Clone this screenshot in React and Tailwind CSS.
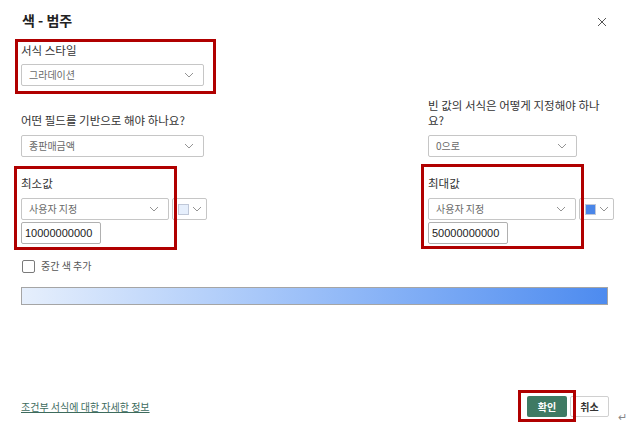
import React from "react";

const font = "font-['Noto_Sans_CJK_KR','Noto_Sans',sans-serif]";
const redBox = "absolute border-[3px] border-[#b00000] pointer-events-none";
const labelClass = "text-[11.5px] text-[#333]";

function Chevron() {
  return (
    <svg width="10" height="6" viewBox="0 0 10 6" className="shrink-0">
      <polyline points="1,1 5,5 9,1" fill="none" stroke="#888" strokeWidth="0.9" />
    </svg>
  );
}

function Dropdown({ value, width }) {
  return (
    <div className={`${width} h-[22px] border border-[#c6c6c6] rounded-[2px] flex items-center justify-between pl-[7px] pr-[9px] bg-white`}>
      <span className="text-[10px] text-[#6a6a6a] leading-none">{value}</span>
      <Chevron />
    </div>
  );
}

function ColorPicker({ color }) {
  return (
    <div className="w-[35px] h-[22px] border border-[#c6c6c6] rounded-[2px] flex items-center justify-between pl-[5px] pr-[4px] bg-white">
      <div className="w-[11px] h-[11px] border border-[#c0c8d8]" style={{ backgroundColor: color }} />
      <Chevron />
    </div>
  );
}

function ValueInput({ value }) {
  return (
    <div className="w-[80px] h-[22px] border border-[#b0b0b0] rounded-[2px] flex items-center pl-[3px] bg-white">
      <span className="text-[11px] text-[#222] leading-none font-['Liberation_Sans',sans-serif]">{value}</span>
    </div>
  );
}

function MinMaxSection({ label, value, color, boxClass }) {
  return (
    <div className="relative flex flex-col">
      <div className={`${labelClass} leading-[16px]`}>{label}</div>
      <div className="flex items-center gap-[3px] mt-[7px]">
        <Dropdown value="사용자 지정" width="w-[148px]" />
        <ColorPicker color={color} />
      </div>
      <div className="mt-[2px]">
        <ValueInput value={value} />
      </div>
      <div className={`${redBox} ${boxClass}`} />
    </div>
  );
}

export default function App() {
  return (
    <div className={`${font} relative w-[632px] h-[435px] bg-white flex flex-col pl-[21px] pr-[18px] pt-[10px] pb-[13px] overflow-hidden`}>
      <div className="flex items-center justify-between h-[20px]">
        <div className="text-[14px] font-bold text-[#222] leading-[20px] pl-[1px]">색 - 범주</div>
        <svg width="10" height="10" viewBox="0 0 10 10" className="mr-[7px] mt-[3px]">
          <path d="M1 1 L9 9 M9 1 L1 9" stroke="#555" strokeWidth="1" />
        </svg>
      </div>

      <div className="relative mt-[12px] w-[183px]">
        <div className={`${labelClass} leading-[16px]`}>서식 스타일</div>
        <div className="mt-[6px]">
          <Dropdown value="그라데이션" width="w-[183px]" />
        </div>
        <div className={`${redBox} -left-[6px] -top-[3px] w-[201px] h-[55px]`} />
      </div>

      <div className="flex items-end justify-between mt-[12px]">
        <div className="flex flex-col w-[186px]">
          <div className={`${labelClass} leading-[15px]`}>어떤 필드를 기반으로 해야 하나요?</div>
          <div className="mt-[7px]">
            <Dropdown value="종판매금액" width="w-[183px]" />
          </div>
        </div>
        <div className="flex flex-col w-[186px]">
          <div className={`${labelClass} leading-[15px]`}>빈 값의 서식은 어떻게 지정해야 하나요?</div>
          <div className="mt-[7px]">
            <Dropdown value="0으로" width="w-[149px]" />
          </div>
        </div>
      </div>

      <div className="flex items-start justify-between mt-[18px]">
        <MinMaxSection label="최소값" value="10000000000" color="#e6effc" boxClass="-left-[7px] -top-[9px] w-[163px] h-[84px]" />
        <div className="w-[186px]">
          <MinMaxSection label="최대값" value="50000000000" color="#4a86e8" boxClass="-left-[7px] -top-[11px] w-[163px] h-[85px]" />
        </div>
      </div>

      <div className="flex items-center mt-[15px] h-[14px]">
        <div className="w-[13px] h-[13px] border border-[#7a7a7a] rounded-[2px] ml-[1px]" />
        <span className="ml-[6px] text-[10px] text-[#555] leading-none">중간 색 추가</span>
      </div>

      <div className="mt-[14px] h-[18px] mr-[6px] border border-[#a5a5a5] bg-gradient-to-r from-[#e6effc] to-[#4d8bef]" />

      <div className="flex-1" />

      <div className="flex items-center justify-between">
        <a className="text-[10px] text-[#3d6b5d] underline leading-none">조건부 서식에 대한 자세한 정보</a>
        <div className="flex items-center mr-[-14px]">
          <div className="relative">
            <div className="w-[40px] h-[21px] bg-[#3f7a63] rounded-[2px] flex items-center justify-center text-[10px] font-bold text-white">확인</div>
            <div className={`${redBox} -left-[9px] -top-[6px] w-[58px] h-[32px]`} />
          </div>
          <div className="ml-[3px] w-[39px] h-[21px] border border-[#d0d0d0] rounded-[2px] flex items-center justify-center text-[10px] font-bold text-[#333]">취소</div>
          <span className="ml-[9px] w-[10px] mt-[20px] text-[11px] text-[#888] leading-none">↵</span>
        </div>
      </div>
    </div>
  );
}
